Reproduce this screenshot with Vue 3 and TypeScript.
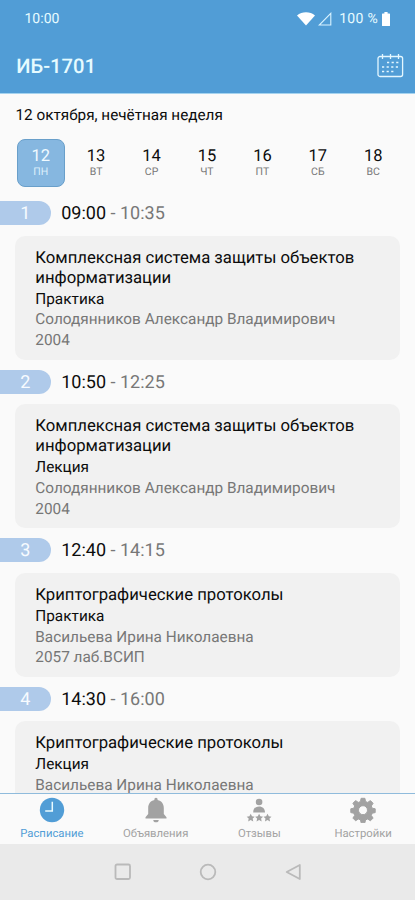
<script setup lang="ts">
interface Day { date: number; name: string }
interface Lesson {
  start: string
  end: string
  title: string
  kind: string
  teacher: string
  room?: string
}

const selectedDate = 12

const days: Day[] = [
  { date: 12, name: 'ПН' },
  { date: 13, name: 'ВТ' },
  { date: 14, name: 'СР' },
  { date: 15, name: 'ЧТ' },
  { date: 16, name: 'ПТ' },
  { date: 17, name: 'СБ' },
  { date: 18, name: 'ВС' },
]

const lessons: Lesson[] = [
  { start: '09:00', end: '10:35', title: 'Комплексная система защиты объектов информатизации', kind: 'Практика', teacher: 'Солодянников Александр Владимирович', room: '2004' },
  { start: '10:50', end: '12:25', title: 'Комплексная система защиты объектов информатизации', kind: 'Лекция', teacher: 'Солодянников Александр Владимирович', room: '2004' },
  { start: '12:40', end: '14:15', title: 'Криптографические протоколы', kind: 'Практика', teacher: 'Васильева Ирина Николаевна', room: '2057 лаб.ВСИП' },
  { start: '14:30', end: '16:00', title: 'Криптографические протоколы', kind: 'Лекция', teacher: 'Васильева Ирина Николаевна' },
]
</script>

<template>
  <div class="screen">
    <header class="header">
      <div class="status">
        <span class="clock">10:00</span>
        <div class="indicators">
          <svg class="wifi" width="18" height="14" viewBox="0 0 18 14">
            <path d="M0 3.600C5 -.8 13 -.8 18 3.600L9 13.600Z" fill="#fff" />
          </svg>
          <svg class="signal" width="14" height="14" viewBox="0 0 14 14">
            <path d="M12.800 1.300V13H1.200Z" fill="none" stroke="#d9f3ff" stroke-width="1.100" />
          </svg>
          <span class="percent">100 %</span>
          <svg width="8" height="14" viewBox="0 0 8 14">
            <path d="M2.400 0h3.200v1.400H7.400a.6.6 0 0 1 .6.6v11.400a.6.6 0 0 1-.6.6H.6a.6.6 0 0 1-.6-.6V2a.6.6 0 0 1 .6-.6h1.800z" fill="#fff" />
          </svg>
        </div>
      </div>
      <div class="toolbar">
        <h1 class="group">ИБ-1701</h1>
        <svg class="calendar" width="27" height="24" viewBox="0 0 27 24">
          <g fill="none" stroke="#e4f7ff" stroke-width="1.300">
            <rect x="1" y="2.500" width="24.600" height="20" rx="2" />
            <path d="M5.500 0v5M13.500 0v5M21.500 0v5" />
            <path d="M10 8.500h13M5 13h18M5 17.500h13" stroke-width="1.500" stroke-dasharray="2.200 2.400" />
          </g>
        </svg>
      </div>
    </header>

    <main class="content">
      <p class="today">12 октября, нечётная неделя</p>
      <div class="week">
        <div v-for="day in days" :key="day.date" class="day" :class="{ selected: day.date === selectedDate }">
          <span class="date">{{ day.date }}</span>
          <span class="weekday">{{ day.name }}</span>
        </div>
      </div>
      <section v-for="(lesson, i) in lessons" :key="lesson.start" class="lesson">
        <div class="slot">
          <span class="number">{{ i + 1 }}</span>
          <span class="time">{{ lesson.start }} <span class="end">- {{ lesson.end }}</span></span>
        </div>
        <article class="card">
          <h2 class="title">{{ lesson.title }}</h2>
          <p class="kind">{{ lesson.kind }}</p>
          <p class="detail">{{ lesson.teacher }}</p>
          <p v-if="lesson.room" class="detail">{{ lesson.room }}</p>
        </article>
      </section>
    </main>

    <nav class="tabs">
      <div class="tab active">
        <svg width="26" height="26" viewBox="0 0 26 26">
          <circle cx="13" cy="13" r="12.200" fill="#519dd6" />
          <path d="M13.300 4.700v9.200H6.200" fill="none" stroke="#e9fbff" stroke-width="1.500" />
        </svg>
        <span class="label">Расписание</span>
      </div>
      <div class="tab">
        <svg width="26" height="26" viewBox="0 0 26 26">
          <path d="M13 .8c1 0 1.600.7 1.600 1.700v.5c4 .9 6.200 4 6.200 8v6l2.700 3.200v1.400H2.500v-1.400L5.200 17v-6c0-4 2.200-7.100 6.200-8v-.5c0-1 .6-1.700 1.600-1.700zM10.300 22.900h5.400a2.700 2.300 0 0 1-5.400 0z" fill="#a2a2a2" />
        </svg>
        <span class="label">Объявления</span>
      </div>
      <div class="tab">
        <svg width="26" height="26" viewBox="0 0 26 26">
          <defs>
            <path id="star" d="M0-4 1.300-1.450 4-1.150 2 .8 2.550 3.600 0 2.250-2.550 3.600-2 .8-4-1.150-1.300-1.450Z" />
          </defs>
          <g fill="#a2a2a2">
            <circle cx="13.100" cy="5" r="3.300" />
            <path d="M7.200 15.500c0-4 2.300-6.100 5.900-6.100s5.900 2.100 5.900 6.100z" />
            <use href="#star" x="4.700" y="20.800" />
            <use href="#star" x="13.100" y="20.800" />
            <use href="#star" x="21.500" y="20.800" />
          </g>
        </svg>
        <span class="label">Отзывы</span>
      </div>
      <div class="tab">
        <svg width="26" height="26" viewBox="0 0 26 26">
          <path fill-rule="evenodd" fill="#a2a2a2" stroke="#a2a2a2" stroke-width="1" stroke-linejoin="round" d="M11.100 1.300h3.800l.6 3.200 2.200.9 2.700-1.800 2.700 2.700-1.800 2.700.9 2.200 3 .6v3.800l-3 .6-.9 2.200 1.800 2.700-2.700 2.700-2.700-1.800-2.200.9-.6 2.900h-3.800l-.6-2.900-2.200-.9-2.700 1.800-2.700-2.700 1.800-2.700-.9-2.200-3-.6v-3.800l3-.6.9-2.200L2.900 6.300l2.700-2.700 2.700 1.800 2.200-.9zM13 8.700a4.500 4.500 0 1 0 0 9 4.500 4.500 0 0 0 0-9z" />
        </svg>
        <span class="label">Настройки</span>
      </div>
    </nav>

    <footer class="system">
      <svg width="18" height="18" viewBox="0 0 18 18"><rect x="1.500" y="1.500" width="14.500" height="14.500" rx="1.500" /></svg>
      <svg width="18" height="18" viewBox="0 0 18 18"><circle cx="9" cy="9" r="7.300" /></svg>
      <svg width="18" height="18" viewBox="0 0 18 18"><path d="M15.800 2v14L2.700 9z" stroke-linejoin="round" /></svg>
    </footer>
  </div>
</template>

<style>
body {
  margin: 0;
  background: #fafafa;
}
</style>

<style scoped>
.screen {
  display: flex;
  flex-direction: column;
  width: 415px;
  height: 900px;
  overflow: hidden;
  background: #fafafa;
  color: #0c0c0c;
  font-family: Roboto, sans-serif;
  text-rendering: geometricPrecision;
}
.header {
  flex: none;
  box-sizing: border-box;
  height: 94px;
  background: #519dd6;
  border-bottom: 1px solid #a5d3ef;
  color: #e6fbff;
}
.status {
  display: flex;
  justify-content: space-between;
  align-items: center;
  height: 37px;
  padding: 0 25px 0 24.500px;
  font-size: 14px;
}
.indicators {
  display: flex;
  align-items: center;
}
.signal {
  margin: 0 7px 0 3px;
}
.percent {
  margin-right: 4px;
  letter-spacing: 0.3px;
}
.toolbar {
  display: flex;
  justify-content: space-between;
  align-items: center;
  height: 56px;
  padding: 0 11px 0 16.300px;
}
.calendar {
  margin-top: 1px;
}
.group {
  margin: 2px 0 0;
  font-size: 20.200px;
  font-weight: 500;
}
.content {
  flex: 1;
  min-height: 0;
  overflow: hidden;
}
.today {
  margin: 11px 0 14px 15.500px;
  font-size: 15.300px;
  line-height: 20px;
}
.week {
  display: grid;
  grid-template-columns: repeat(7, 1fr);
  justify-items: center;
  padding: 0 14px 0 13px;
}
.day {
  display: flex;
  flex-direction: column;
  align-items: center;
  box-sizing: border-box;
  width: 48px;
  height: 48px;
  padding-top: 7px;
  border: 1px solid transparent;
  border-radius: 8px;
}
.selected {
  background: #86b7e0;
  border-color: #699fca;
  color: #effaff;
}
.date {
  font-size: 16.500px;
  line-height: 19px;
}
.weekday {
  font-size: 10.500px;
  line-height: 12px;
  color: #777;
}
.selected .weekday {
  color: #dceffb;
}
.lesson {
  padding-top: 10px;
}
.week + .lesson {
  padding-top: 14px;
}
.slot {
  display: flex;
  align-items: center;
  gap: 10.700px;
}
.number {
  box-sizing: border-box;
  width: 50.500px;
  height: 24px;
  border-radius: 0 12px 12px 0;
  background: #afcaea;
  color: #f7fbff;
  font-size: 18px;
  line-height: 26px;
  text-align: center;
}
.time {
  font-size: 18px;
  line-height: 26px;
  height: 24px;
}
.end {
  color: #777;
}
.card {
  margin: 10.500px 15px 0;
  padding: 13.200px 20px 8.800px 20.300px;
  border-radius: 10px;
  background: #f1f1f1;
}
.title {
  margin: 0;
  font-size: 16.700px;
  font-weight: 400;
  line-height: 20px;
}
.kind,
.detail {
  margin: 0;
  font-size: 15.350px;
  line-height: 20.700px;
}
.detail {
  color: #777;
}
.tabs {
  flex: none;
  display: grid;
  grid-template-columns: repeat(4, 1fr);
  box-sizing: border-box;
  height: 51px;
  border-top: 1px solid #8fbbdc;
}
.tab {
  display: flex;
  flex-direction: column;
  align-items: center;
  padding-top: 3px;
  color: #a2a2a2;
}
.active {
  color: #519dd6;
}
.label {
  margin-top: 3px;
  font-size: 11.300px;
  line-height: 15px;
}
.system {
  flex: none;
  display: flex;
  justify-content: center;
  align-items: center;
  gap: 67px;
  height: 56px;
  background: #eaeaea;
}
.system svg {
  fill: none;
  stroke: #bababa;
  stroke-width: 1.800;
}
</style>
